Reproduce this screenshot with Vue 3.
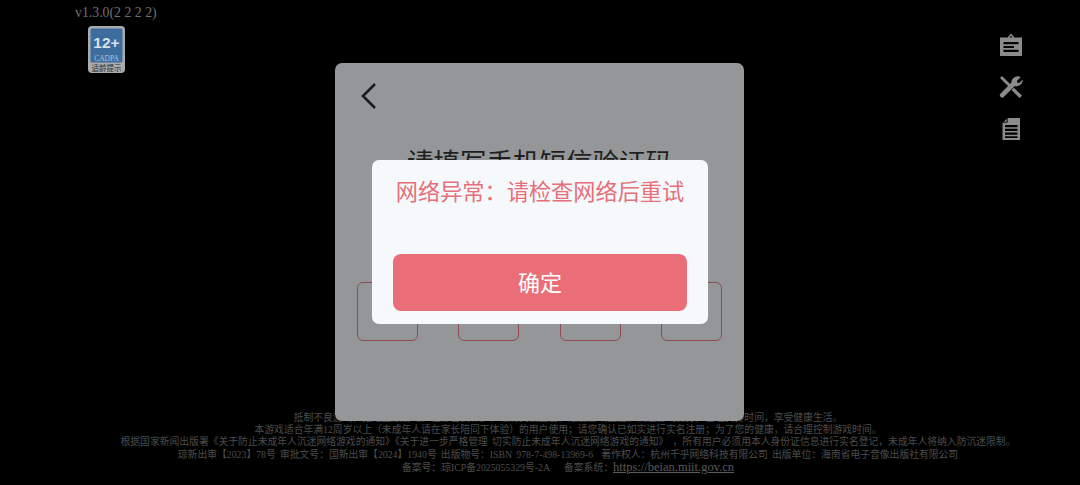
<script setup>
const boxes = [0, 1, 2, 3]
const footerLines = [
  '抵制不良游戏，拒绝盗版游戏。注意自我保护，谨防受骗上当。适度游戏益脑，沉迷游戏伤身。合理安排时间，享受健康生活。',
  '本游戏适合年满12周岁以上（未成年人请在家长陪同下体验）的用户使用；请您确认已如实进行实名注册；为了您的健康，请合理控制游戏时间。',
  '根据国家新闻出版署《关于防止未成年人沉迷网络游戏的通知》《关于进一步严格管理 切实防止未成年人沉迷网络游戏的通知》 ，所有用户必须用本人身份证信息进行实名登记，未成年人将纳入防沉迷限制。',
  '琼新出审【2023】78号 审批文号：国新出审【2024】1940号 出版物号：ISBN 978-7-498-13969-6 \u00a0著作权人：杭州千乎网络科技有限公司 出版单位：海南省电子音像出版社有限公司'
]
</script>

<template>
  <div class="screen">
    <div class="top">
      <div class="left">
        <div class="version">v1.3.0(2 2 2 2)</div>
        <svg class="badge" width="37" height="47" viewBox="0 0 37 47">
          <rect x="0" y="0" width="37" height="47" rx="4" fill="#a9abad" />
          <rect x="2.500" y="2.500" width="32" height="34" rx="1.500" fill="#3d6c9e" />
          <text x="18.500" y="21.500" text-anchor="middle" class="age">12+</text>
          <text x="18.500" y="34.500" text-anchor="middle" class="cadpa">CADPA</text>
          <text x="18.500" y="44.800" text-anchor="middle" class="tip">适龄提示</text>
        </svg>
      </div>
      <div class="tools">
        <svg width="24" height="24" viewBox="0 0 24 24">
          <path fill="#8b8b8b" fill-rule="evenodd" d="M1 4.500h7.500L12 0.500l3.500 4H23V23H1zM10.500 4.500h3L12 2.800zM4.500 9v2.200h15V9zm0 4v2h10.500v-2zm0 3.800V19h15v-2.200z" />
        </svg>
        <svg width="24" height="24" viewBox="0 0 24 24">
          <path fill="#8b8b8b" d="M3 1 11.800 9.800 9.800 11.800 1 3z" />
          <path fill="#8b8b8b" d="M21.800 2.200 18 5.800l.4 1.900 1.900.4 3.400-3.600a6.200 6.200 0 0 1-8 6.400L5 21.800a2.400 2.400 0 0 1-3.400-3.400L12.400 7.600a6.200 6.200 0 0 1 9.400-5.400z" />
          <path fill="#8b8b8b" d="M14.800 12.800 23 20.600 20.600 23 12.600 15z" />
        </svg>
        <svg width="24" height="24" viewBox="0 0 24 24">
          <path fill="#8b8b8b" fill-rule="evenodd" d="M8.500 1H21v22H3.500V6zM6 8v2.200h12.500V8zm0 3.800V14h12.500v-2.200zm0 3.800v2.200h12.500v-2.200zM6 19.300v1.600h12.500v-1.600z" />
          <path fill="none" stroke="#000" stroke-width="0.900" d="M3.800 5.200h4.400V1" />
        </svg>
      </div>
    </div>

    <div class="footer">
      <p v-for="line in footerLines" :key="line">{{ line }}</p>
      <p>备案号：琼ICP备2025055329号-2A<span class="gap"></span>备案系统：<u class="link">https://beian.miit.gov.cn</u></p>
    </div>

    <div class="panel">
      <svg class="back" width="18" height="28" viewBox="0 0 18 28">
        <path d="M15 2 3 14l12 12" fill="none" stroke="#1c1c1c" stroke-width="2.600" />
      </svg>
      <div class="title">请填写手机短信验证码</div>
      <div class="code-row">
        <div v-for="b in boxes" :key="b" class="code-box"></div>
      </div>
    </div>

    <div class="dialog">
      <div class="message">网络异常：请检查网络后重试</div>
      <button class="confirm">确定</button>
    </div>
  </div>
</template>

<style>
html,
body {
  margin: 0;
  background: #000;
}
</style>

<style scoped>
.screen {
  position: relative;
  width: 1080px;
  height: 485px;
  overflow: hidden;
  background: #000;
  display: flex;
  flex-direction: column;
  justify-content: space-between;
  font-family: "Noto Sans CJK SC", "Liberation Sans", sans-serif;
}

.top {
  display: flex;
  justify-content: space-between;
  padding: 5px 57px 0 75px;
}

.left {
  display: flex;
  flex-direction: column;
  align-items: flex-start;
}

.version {
  font-family: "Liberation Serif", serif;
  font-size: 13.800px;
  line-height: 16px;
  color: #707070;
}

.badge {
  margin: 5px 0 0 13px;
}

.age {
  font-family: "Liberation Sans", sans-serif;
  font-weight: 700;
  font-size: 15.500px;
  fill: #d8e0ea;
}

.cadpa {
  font-family: "Liberation Serif", serif;
  font-size: 7.500px;
  fill: #b4c4d6;
}

.tip {
  font-family: "Noto Sans CJK SC", sans-serif;
  font-size: 7.500px;
  fill: #2c2c2c;
}

.tools {
  display: flex;
  flex-direction: column;
  gap: 18px;
  padding-top: 28px;
}

.footer {
  padding: 0 0 11px 56px;
  text-align: center;
  color: #4c4c4c;
  font-family: "Liberation Serif", "Noto Sans CJK SC", serif;
  font-size: 9.800px;
  line-height: 12.200px;
  word-spacing: 1.700px;
}

.footer p {
  margin: 0;
}

.gap {
  display: inline-block;
  width: 14px;
}

.link {
  font-size: 12.500px;
  color: #5a5a5a;
}

.panel {
  position: absolute;
  left: 335px;
  top: 63px;
  width: 409px;
  height: 358px;
  box-sizing: border-box;
  padding: 19px 22px 0;
  border-radius: 7px;
  background: #949698;
}

.back {
  display: block;
  margin-left: 3px;
}

.title {
  margin-top: 31px;
  text-align: center;
  font-size: 26.500px;
  line-height: 40px;
  color: #1f1f1f;
}

.code-row {
  display: flex;
  justify-content: space-between;
  margin-top: 101px;
}

.code-box {
  width: 61px;
  height: 59px;
  box-sizing: border-box;
  border: 1px solid #8f4a55;
  border-radius: 6px;
}

.dialog {
  position: absolute;
  left: 372px;
  top: 160px;
  width: 336px;
  height: 164px;
  box-sizing: border-box;
  padding: 13px 21px 0;
  border-radius: 7px;
  background: #f6f9fc;
}

.message {
  text-align: center;
  font-size: 22.200px;
  line-height: 34px;
  color: #e66f7a;
}

.confirm {
  display: block;
  width: 294px;
  height: 57px;
  margin-top: 47px;
  padding: 0 0 4px;
  border: 0;
  border-radius: 8px;
  background: #ea6e78;
  color: #fff;
  font-family: inherit;
  font-size: 22px;
}
</style>
